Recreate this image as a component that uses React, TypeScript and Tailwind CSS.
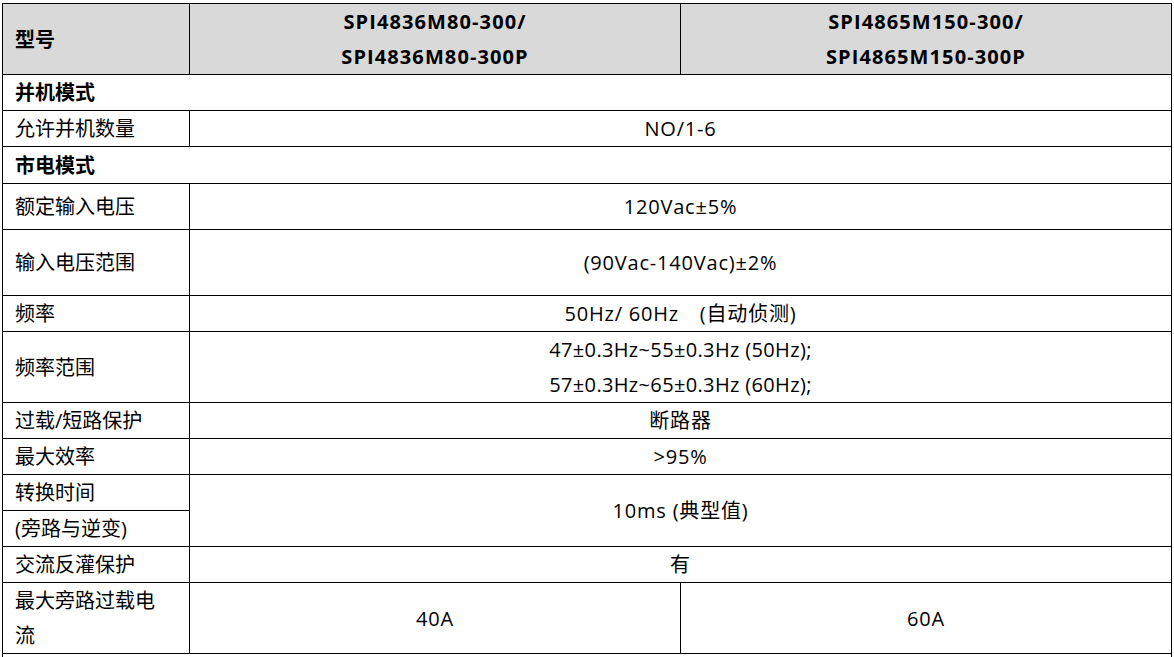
import React from "react";

const cellL = "border border-black pl-[12px] pr-2 text-left align-middle leading-[35px]";
const cellC = "border border-black px-2 text-center align-middle leading-[35px] tracking-[0.8px]";

export default function App() {
  return (
    <div className="bg-white w-[1174px] h-[657px] overflow-hidden pt-[3px] pl-[2px] font-['Open_Sans','Noto_Sans_CJK_SC',sans-serif] text-[20px] text-black">
      <table className="table-fixed border-collapse w-[1169px]">
        <colgroup>
          <col className="w-[187px]" />
          <col className="w-[491px]" />
          <col className="w-[491px]" />
        </colgroup>
        <tbody>
          <tr className="h-[71px] bg-[#d9d9d9] font-bold">
            <td className={cellL}>型号</td>
            <td className={cellC + " tracking-[1.1px]"}>
              SPI4836M80-300/
              <br />
              SPI4836M80-300P
            </td>
            <td className={cellC + " tracking-[1.1px]"}>
              SPI4865M150-300/
              <br />
              SPI4865M150-300P
            </td>
          </tr>
          <tr className="h-[36px]">
            <td colSpan={3} className={cellL + " font-bold"}>并机模式</td>
          </tr>
          <tr className="h-[36px]">
            <td className={cellL}>允许并机数量</td>
            <td colSpan={2} className={cellC}>NO/1-6</td>
          </tr>
          <tr className="h-[37px]">
            <td colSpan={3} className={cellL + " font-bold"}>市电模式</td>
          </tr>
          <tr className="h-[46px]">
            <td className={cellL}>额定输入电压</td>
            <td colSpan={2} className={cellC}>120Vac±5%</td>
          </tr>
          <tr className="h-[66px]">
            <td className={cellL}>输入电压范围</td>
            <td colSpan={2} className={cellC}>(90Vac-140Vac)±2%</td>
          </tr>
          <tr className="h-[36px]">
            <td className={cellL}>频率</td>
            <td colSpan={2} className={cellC + " whitespace-pre"}>50Hz/ 60Hz　(自动侦测)</td>
          </tr>
          <tr className="h-[71px]">
            <td className={cellL}>频率范围</td>
            <td colSpan={2} className={cellC + " tracking-[0.35px]"}>
              47±0.3Hz~55±0.3Hz (50Hz);
              <br />
              57±0.3Hz~65±0.3Hz (60Hz);
            </td>
          </tr>
          <tr className="h-[36px]">
            <td className={cellL}>过载/短路保护</td>
            <td colSpan={2} className={cellC}>断路器</td>
          </tr>
          <tr className="h-[36px]">
            <td className={cellL}>最大效率</td>
            <td colSpan={2} className={cellC}>&gt;95%</td>
          </tr>
          <tr className="h-[36px]">
            <td className={cellL}>转换时间</td>
            <td colSpan={2} rowSpan={2} className={cellC}>10ms (典型值)</td>
          </tr>
          <tr className="h-[36px]">
            <td className={cellL}>(旁路与逆变)</td>
          </tr>
          <tr className="h-[36px]">
            <td className={cellL}>交流反灌保护</td>
            <td colSpan={2} className={cellC}>有</td>
          </tr>
          <tr className="h-[71px]">
            <td className={cellL}>
              最大旁路过载电
              <br />
              流
            </td>
            <td className={cellC}>40A</td>
            <td className={cellC}>60A</td>
          </tr>
          <tr className="h-[36px]">
            <td colSpan={3} className={cellL + " font-bold"}>&nbsp;</td>
          </tr>
        </tbody>
      </table>
    </div>
  );
}
